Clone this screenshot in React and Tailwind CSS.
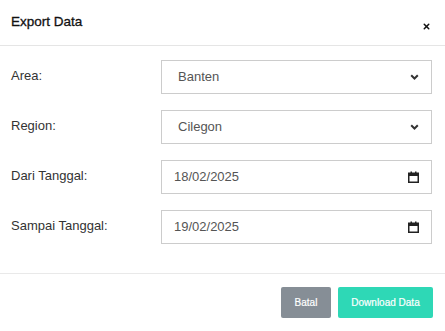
import { X } from 'lucide-react'

const ChevronDown = () => (
  <svg width="9" height="6" viewBox="0 0 9 6" fill="none" stroke="#333" strokeWidth="2">
    <path d="M1.2 1.2 L4.5 4.5 L7.8 1.2" />
  </svg>
)

const CalendarIcon = () => (
  <svg width="11" height="12" viewBox="0 0 11 12" fill="none">
    <rect x="0.75" y="2.25" width="9.5" height="9" stroke="#222" strokeWidth="1.5" />
    <rect x="0.5" y="2" width="10" height="3" fill="#222" />
    <rect x="2.5" y="0.5" width="1.5" height="2" fill="#222" />
    <rect x="7" y="0.5" width="1.5" height="2" fill="#222" />
  </svg>
)

const Field = ({ label, value, icon }) => (
  <div className="flex items-start">
    <label className="w-[150px] shrink-0 pt-[6px] text-[13px] text-[#333]">{label}</label>
    <div className="flex h-[34px] flex-1 items-center justify-between border border-[#ccc] bg-white px-3 text-[13px] text-[#555]">
      <span className={icon === 'select' ? 'pl-1' : ''}>{value}</span>
      {icon === 'select' ? <ChevronDown /> : <CalendarIcon />}
    </div>
  </div>
)

export default function App() {
  return (
    <div className="h-[331px] w-[445px] bg-white font-['Liberation_Sans',Arial,sans-serif]">
      <div className="flex h-[46px] items-center justify-between border-b border-[#e5e5e5] px-[11px]">
        <h3 className="text-[13.5px] font-normal text-[#111] [-webkit-text-stroke:0.3px_#111]">Export Data</h3>
        <button className="mt-[8px] mr-[3px] text-[#111]">
          <X size={9} strokeWidth={4} />
        </button>
      </div>

      <div className="flex flex-col gap-4 px-[11px] pr-[13px] pt-[14px] pb-[29px]">
        <Field label="Area:" value="Banten" icon="select" />
        <Field label="Region:" value="Cilegon" icon="select" />
        <Field label="Dari Tanggal:" value="18/02/2025" icon="date" />
        <Field label="Sampai Tanggal:" value="19/02/2025" icon="date" />
      </div>

      <div className="flex justify-end gap-[7px] border-t border-[#e9e9e9] px-[12px] pt-[13px]">
        <button className="h-[31px] w-[50px] rounded-[2px] bg-[#868e96] text-[10px] font-normal text-white [-webkit-text-stroke:0.2px_#fff]">
          Batal
        </button>
        <button className="h-[31px] w-[95px] rounded-[2px] bg-[#2ed8b6] text-[10px] font-normal text-white [-webkit-text-stroke:0.2px_#fff]">
          Download Data
        </button>
      </div>
    </div>
  )
}
